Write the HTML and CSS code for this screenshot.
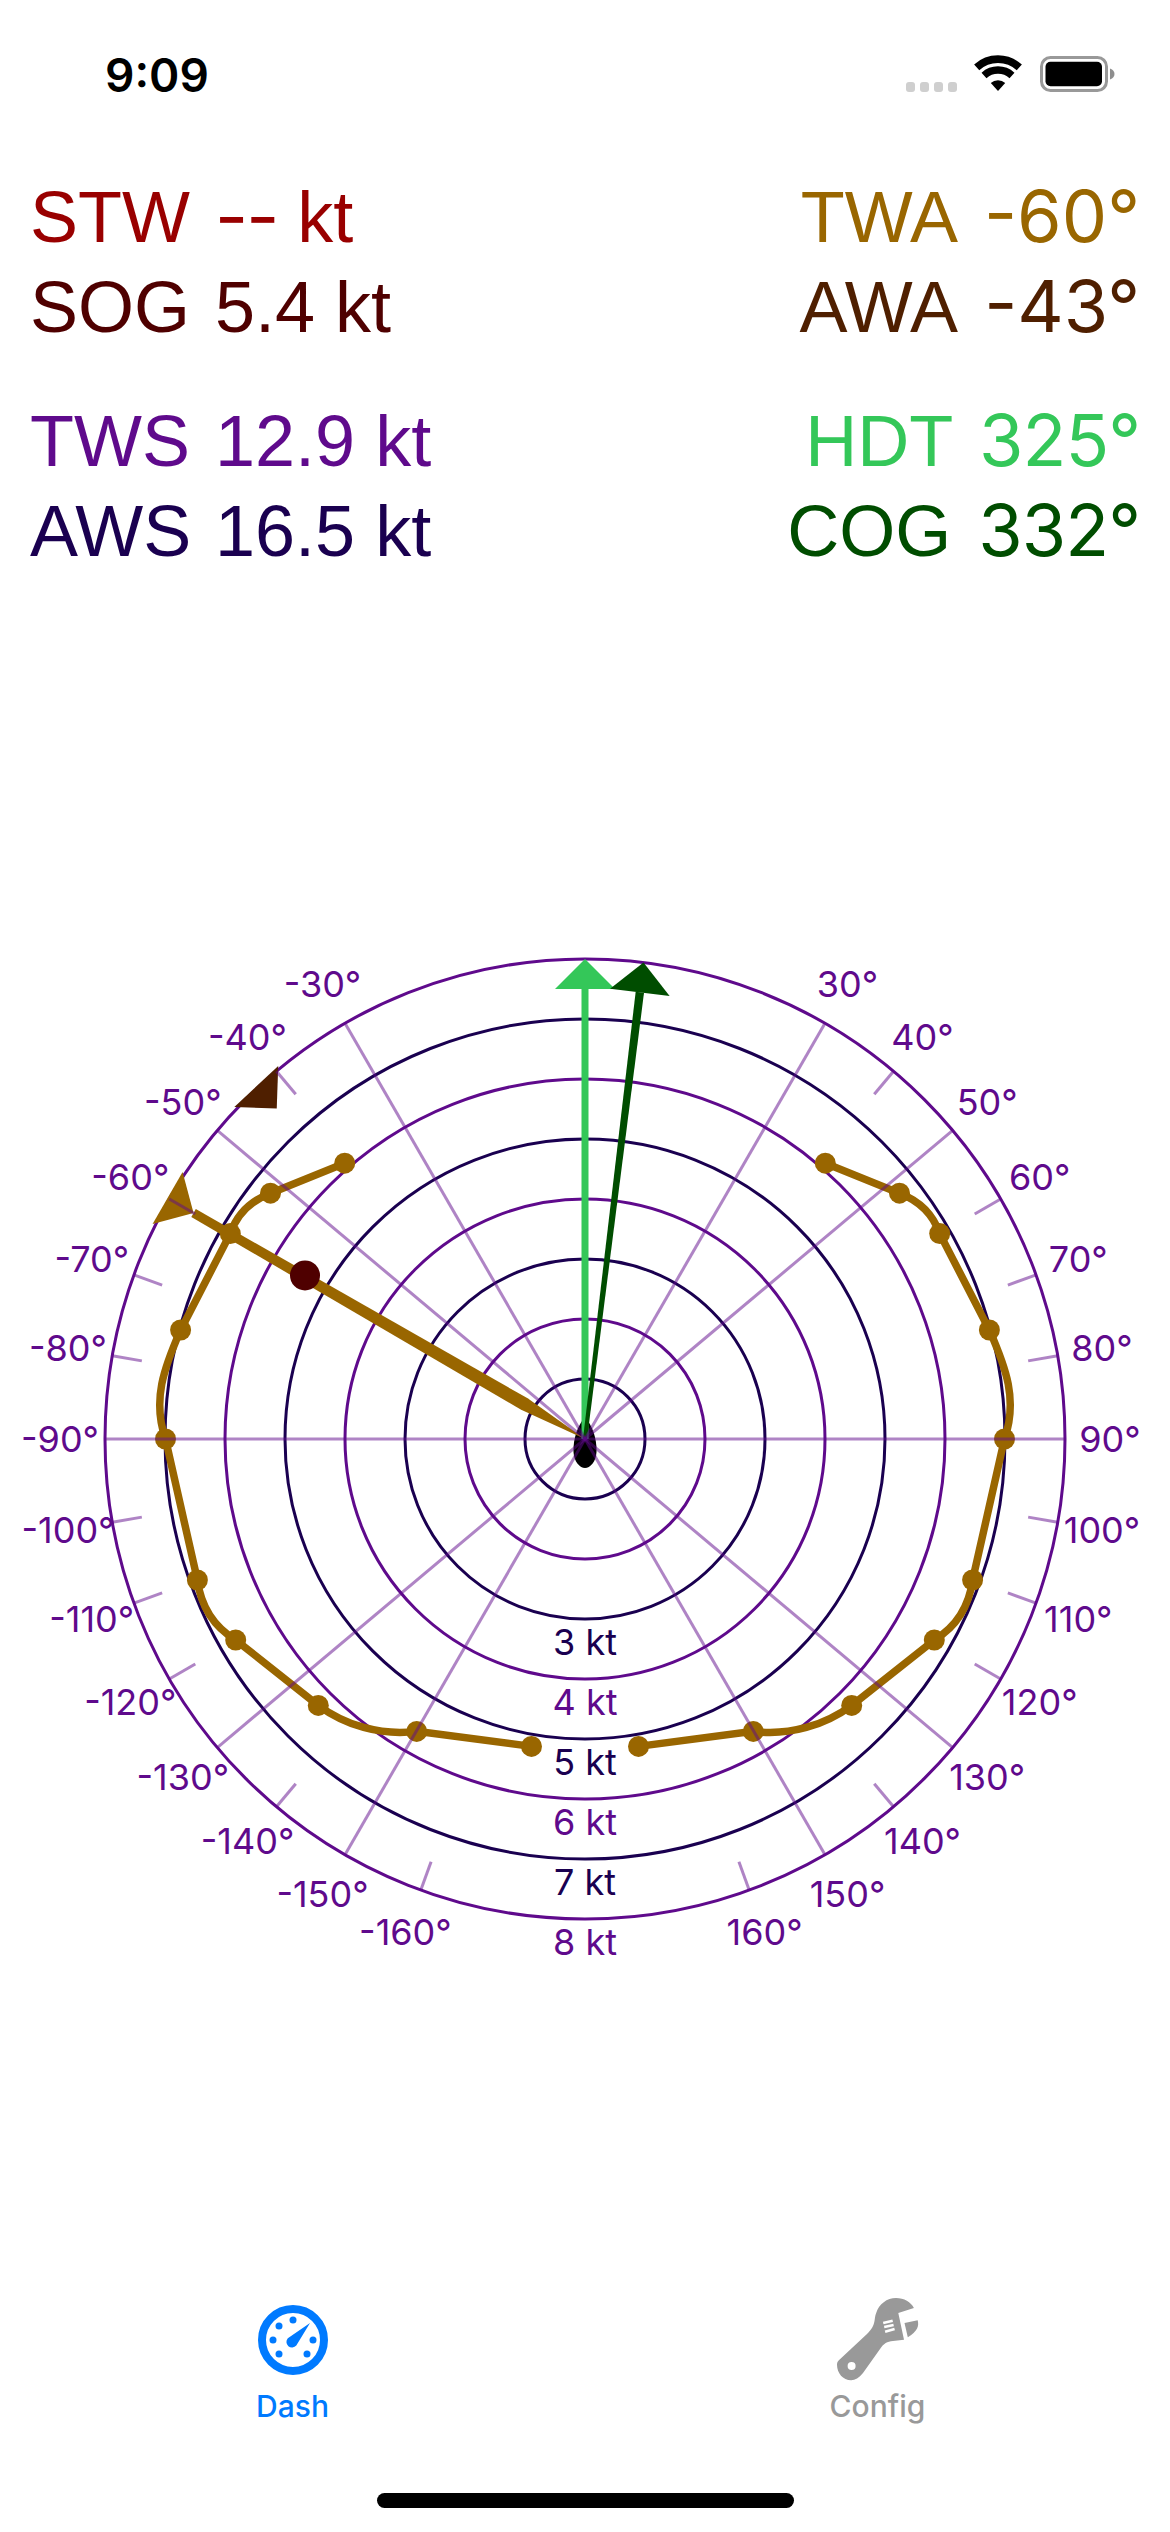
FILE: index.html
```html
<!DOCTYPE html>
<html lang="en">
<head>
<meta charset="utf-8">
<title>Dash</title>
<link rel="stylesheet" href="styles.css">
</head>
<body>
<div class="page">
  <header class="status">
    <div class="time">9:09</div>
    <div class="status-icons">
      <div class="signal"><span></span><span></span><span></span><span></span></div>
      <svg class="wifi" width="48" height="36" viewBox="0 0 48 36">
        <path class="wifi-arc wifi-outer" d="M2.7 12.4A31.8 31.8 0 0 1 45.3 12.4"/>
        <path class="wifi-arc wifi-mid" d="M10 20.4A21 21 0 0 1 38 20.4"/>
        <path class="wifi-dot" d="M24 36L16.8 28A10.7 10.7 0 0 1 31.2 28Z"/>
      </svg>
      <svg class="battery" width="75" height="36" viewBox="0 0 75 36">
        <rect class="battery-shell" x="1.5" y="1.5" width="65" height="33" rx="9"/>
        <rect class="battery-level" x="5.5" y="5.7" width="56.5" height="24.6" rx="5"/>
        <path class="battery-nub" d="M70 12.5C73 13.5 74.5 15.5 74.5 18C74.5 20.5 73 22.5 70 23.5Z"/>
      </svg>
    </div>
  </header>

  <section class="readouts">
    <div class="group">
      <div class="row stw"><span class="lab">STW</span> <span class="dash">--</span> kt</div>
      <div class="row sog"><span class="lab">SOG</span> 5.4 kt</div>
    </div>
    <div class="group right">
      <div class="row twa"><span>TWA</span> <span class="val">-60°</span></div>
      <div class="row awa"><span>AWA</span> <span class="val">-43°</span></div>
    </div>
    <div class="group">
      <div class="row tws"><span class="lab">TWS</span> 12.9 kt</div>
      <div class="row aws"><span class="lab">AWS</span> 16.5 kt</div>
    </div>
    <div class="group right">
      <div class="row hdt"><span>HDT</span> <span class="val">325°</span></div>
      <div class="row cog"><span>COG</span> <span class="val">332°</span></div>
    </div>
  </section>

  <svg class="polar" width="1170" height="1100" viewBox="-585 -539 1170 1100">
    <defs>
      <g id="curve-side">
        <path class="curve" d="M240.3 -275.8L314.5 -245.8Q345 -234 354.7 -205.4L404.4 -109C421 -71 433 -39 419.5 0L387.6 141Q382.3 181 349.3 201L266.7 266.4C240 286 205 297 168.3 292.4L53.5 307.4"/>
        <circle class="curve-dot" cx="240.3" cy="-275.8" r="10.5"/>
        <circle class="curve-dot" cx="314.5" cy="-245.8" r="10.5"/>
        <circle class="curve-dot" cx="354.7" cy="-205.4" r="10.5"/>
        <circle class="curve-dot" cx="404.4" cy="-109" r="10.5"/>
        <circle class="curve-dot" cx="419.5" cy="0" r="10.5"/>
        <circle class="curve-dot" cx="387.6" cy="141" r="10.5"/>
        <circle class="curve-dot" cx="349.3" cy="201" r="10.5"/>
        <circle class="curve-dot" cx="266.7" cy="266.4" r="10.5"/>
        <circle class="curve-dot" cx="168.3" cy="292.4" r="10.5"/>
        <circle class="curve-dot" cx="53.5" cy="307.4" r="10.5"/>
      </g>
    </defs>

    <g class="rings">
      <circle class="ring-navy" r="60"/>
      <circle class="ring-purple" r="120"/>
      <circle class="ring-navy" r="180"/>
      <circle class="ring-purple" r="240"/>
      <circle class="ring-navy" r="300"/>
      <circle class="ring-purple" r="360"/>
      <circle class="ring-navy" r="420"/>
      <circle class="ring-purple" r="480"/>
    </g>

    <use href="#curve-side"/>
    <use href="#curve-side" transform="scale(-1 1)"/>

    <path class="boat" d="M0 -22C7 -14 12 -1 11.5 13C11 23 5 29 0 29C-5 29 -11 23 -11.5 13C-12 -1 -7 -14 0 -22Z"/>

    <g transform="rotate(-60)">
      <polygon class="head-twa" points="-4.5,-452 4.5,-452 6.5,-70 0,0 -6.5,-70"/>
      <polygon class="head-twa" points="-30,-482 30,-482 0,-452"/>
    </g>
    <g transform="rotate(-43)">
      <polygon class="head-awa" points="-30,-482 30,-482 0,-452"/>
    </g>
    <circle class="sog-dot" cx="-280" cy="-163.6" r="15"/>
    <g>
      <line class="needle-hdt" x1="0" y1="0" x2="0" y2="-450"/>
      <polygon class="head-hdt" points="0,-480 30,-450 -30,-450"/>
    </g>
    <g transform="rotate(7)">
      <polygon class="head-cog" points="-4.2,-450 4.2,-450 2,0 -2,0"/>
      <polygon class="head-cog" points="0,-480 30,-450 -30,-450"/>
    </g>

    <g class="spokes">
      <line y2="-480" transform="rotate(30)"/>
      <line y2="-480" transform="rotate(50)"/>
      <line y2="-480" transform="rotate(90)"/>
      <line y2="-480" transform="rotate(130)"/>
      <line y2="-480" transform="rotate(150)"/>
      <line y2="-480" transform="rotate(-30)"/>
      <line y2="-480" transform="rotate(-50)"/>
      <line y2="-480" transform="rotate(-90)"/>
      <line y2="-480" transform="rotate(-130)"/>
      <line y2="-480" transform="rotate(-150)"/>
      <line y1="-450" y2="-480" transform="rotate(40)"/>
      <line y1="-450" y2="-480" transform="rotate(60)"/>
      <line y1="-450" y2="-480" transform="rotate(70)"/>
      <line y1="-450" y2="-480" transform="rotate(80)"/>
      <line y1="-450" y2="-480" transform="rotate(100)"/>
      <line y1="-450" y2="-480" transform="rotate(110)"/>
      <line y1="-450" y2="-480" transform="rotate(120)"/>
      <line y1="-450" y2="-480" transform="rotate(140)"/>
      <line y1="-450" y2="-480" transform="rotate(160)"/>
      <line y1="-450" y2="-480" transform="rotate(-40)"/>
      <line y1="-450" y2="-480" transform="rotate(-60)"/>
      <line y1="-450" y2="-480" transform="rotate(-70)"/>
      <line y1="-450" y2="-480" transform="rotate(-80)"/>
      <line y1="-450" y2="-480" transform="rotate(-100)"/>
      <line y1="-450" y2="-480" transform="rotate(-110)"/>
      <line y1="-450" y2="-480" transform="rotate(-120)"/>
      <line y1="-450" y2="-480" transform="rotate(-140)"/>
      <line y1="-450" y2="-480" transform="rotate(-160)"/>
    </g>

    <g class="deg">
      <text x="262.5" y="-441.7">30°</text>
      <text x="337.5" y="-389.2">40°</text>
      <text x="402.2" y="-324.5">50°</text>
      <text x="454.7" y="-249.5">60°</text>
      <text x="493.3" y="-166.6">70°</text>
      <text x="517" y="-78.2">80°</text>
      <text x="525" y="13">90°</text>
      <text x="517" y="104.2">100°</text>
      <text x="493.3" y="192.6">110°</text>
      <text x="454.7" y="275.5">120°</text>
      <text x="402.2" y="350.5">130°</text>
      <text x="337.5" y="415.2">140°</text>
      <text x="262.5" y="467.7">150°</text>
      <text x="179.6" y="506.3">160°</text>
      <text x="-262.5" y="-441.7">-30°</text>
      <text x="-337.5" y="-389.2">-40°</text>
      <text x="-402.2" y="-324.5">-50°</text>
      <text x="-454.7" y="-249.5">-60°</text>
      <text x="-493.3" y="-166.6">-70°</text>
      <text x="-517" y="-78.2">-80°</text>
      <text x="-525" y="13">-90°</text>
      <text x="-517" y="104.2">-100°</text>
      <text x="-493.3" y="192.6">-110°</text>
      <text x="-454.7" y="275.5">-120°</text>
      <text x="-402.2" y="350.5">-130°</text>
      <text x="-337.5" y="415.2">-140°</text>
      <text x="-262.5" y="467.7">-150°</text>
      <text x="-179.6" y="506.3">-160°</text>
    </g>
    <g class="speed">
      <text class="speed-navy" y="215.5">3 kt</text>
      <text class="speed-purple" y="275.5">4 kt</text>
      <text class="speed-navy" y="335.5">5 kt</text>
      <text class="speed-purple" y="395.5">6 kt</text>
      <text class="speed-navy" y="455.5">7 kt</text>
      <text class="speed-purple" y="515.5">8 kt</text>
    </g>
  </svg>

  <nav class="tabbar">
    <div class="tab active">
      <div class="tab-icon">
        <svg width="70" height="70" viewBox="-35 -35 70 70">
          <circle class="gauge-rim" r="31"/>
          <g class="gauge-marks">
            <circle cx="0" cy="-20" r="3.5"/>
            <circle cx="-14" cy="-14" r="3.5"/>
            <circle cx="-20" cy="0" r="3.5"/>
            <circle cx="20" cy="0" r="3.5"/>
            <circle cx="-14" cy="14" r="3.5"/>
            <circle cx="14" cy="14" r="3.5"/>
            <path d="M17 -17L-5.2 -1.8A5.6 5.6 0 1 0 3.3 5.6Z"/>
          </g>
        </svg>
      </div>
      <div class="tab-label">Dash</div>
    </div>
    <div class="tab">
      <div class="tab-icon">
        <svg width="82" height="83" viewBox="0 0 82 83">
          <path class="wrench" fill-rule="evenodd" d="M0 66.7C0 64 1 63 2.4 61.7L30 36C35 31 36.5 28 37.5 23C38 20 38 18 39.2 15C42 6 50 0 59 0C67 0 74 4 76.9 10L61.3 15L67 41.7L56 43C50 43.5 47 45 42.5 51.7L26 75C22 80 18 82.3 14.2 82.3C6 82.3 0 75 0 66.7ZM18.6 68A4 4 0 1 0 10.6 68A4 4 0 1 0 18.6 68Z"/>
          <path class="wrench" d="M67.5 25L80.7 22.3C82 28 81 33 70.8 39.3Z"/>
          <g class="wrench-slots">
            <line x1="46.2" y1="25" x2="55.7" y2="22.7"/>
            <line x1="47.2" y1="29" x2="56.6" y2="27"/>
            <line x1="48.1" y1="33.7" x2="57.6" y2="31"/>
          </g>
        </svg>
      </div>
      <div class="tab-label">Config</div>
    </div>
  </nav>
  <div class="home-bar"></div>
</div>
</body>
</html>
```

FILE: styles.css
```css
* { box-sizing: border-box; }
html, body { margin: 0; padding: 0; background: #fff; }

.page {
  width: 1170px;
  height: 2532px;
  display: flex;
  flex-direction: column;
  overflow: hidden;
  background: #fff;
}

/* status bar */
.status {
  height: 172px;
  flex: none;
  display: flex;
  justify-content: space-between;
  align-items: flex-start;
  padding: 50px 55px 0 105px;
}
.time {
  font: 600 46px/50px Inter, "Liberation Sans", sans-serif;
  color: #000;
}
.status-icons {
  display: flex;
  align-items: flex-end;
  height: 37px;
  margin-top: 5px;
}
.signal { display: flex; gap: 5px; margin-right: 17px; }
.signal span { width: 9px; height: 10px; border-radius: 3px; background: #cfcfcf; }
.wifi { display: block; margin-right: 18px; margin-bottom: 1px; }
.wifi-arc { fill: none; stroke: #000; }
.wifi-outer { stroke-width: 7.7; }
.wifi-mid { stroke-width: 7.4; }
.wifi-dot { fill: #000; }
.battery { display: block; }
.battery-shell { fill: none; stroke: #999; stroke-width: 3; }
.battery-level { fill: #000; }
.battery-nub { fill: #8e8e8e; }

/* readouts */
.readouts {
  flex: none;
  display: grid;
  grid-template-columns: 1fr 1fr;
  row-gap: 44px;
  padding: 0 30px;
  font: 400 72px/90px "Liberation Sans", Arial, sans-serif;
  white-space: nowrap;
}
.row { height: 90px; }
.right { text-align: right; }
.lab { display: inline-block; width: 165px; }
.dash { font-family: Inter, sans-serif; line-height: 0; letter-spacing: -2px; }
.val { font-family: Inter, sans-serif; line-height: 0; margin-left: 10px; }
.hdt .val, .cog .val { letter-spacing: -1px; margin-left: 7px; }
.stw { color: #990000; }
.sog { color: #4f0000; }
.tws { color: #5f0a8c; }
.aws { color: #1a0050; }
.twa { color: #996600; }
.awa { color: #4f1f00; }
.hdt { color: #34c759; }
.cog { color: #004d00; }

/* polar chart */
.polar { display: block; flex: none; margin-top: 324px; }
.rings circle { fill: none; stroke-width: 3; }
.ring-navy { stroke: #1a0050; }
.ring-purple { stroke: #5f0a8c; }
.curve { fill: none; stroke: #996600; stroke-width: 7.5; }
.curve-dot { fill: #996600; }
.boat { fill: #000; }
.head-twa { fill: #996600; }
.head-awa { fill: #4f1f00; }
.sog-dot { fill: #4f0000; }
.needle-hdt { stroke: #34c759; stroke-width: 7; }
.head-hdt { fill: #34c759; }
.head-cog { fill: #004d00; }
.spokes line { stroke: #5f0a8c; stroke-opacity: 0.5; stroke-width: 3; }
.deg text, .speed text {
  font: 400 36px Inter, "Liberation Sans", sans-serif;
  text-anchor: middle;
}
.deg text { fill: #5f0a8c; }
.speed-navy { fill: #1a0050; }
.speed-purple { fill: #5f0a8c; }

/* tab bar */
.tabbar {
  margin-top: auto;
  flex: none;
  display: grid;
  grid-template-columns: 1fr 1fr;
}
.tab { display: flex; flex-direction: column; align-items: center; color: #999; }
.tab.active { color: #007aff; }
.tab-icon { height: 97px; display: flex; align-items: center; justify-content: center; }
.tab-icon svg { display: block; }
.tab-label { font: 500 30px/36px Inter, "Liberation Sans", sans-serif; }
.gauge-rim { fill: none; stroke: #007aff; stroke-width: 8; }
.gauge-marks { fill: #007aff; }
.wrench { fill: #999; }
.wrench-slots line { stroke: #fff; stroke-width: 2.5; }

.home-bar {
  flex: none;
  width: 417px;
  height: 15px;
  margin: 69px auto 24px;
  border-radius: 8px;
  background: #000;
}
```
